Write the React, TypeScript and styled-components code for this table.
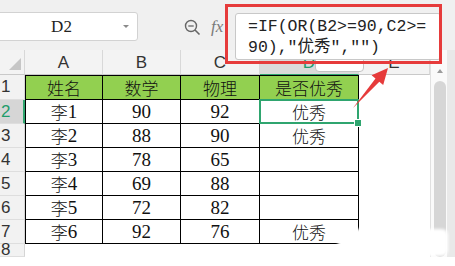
import { Fragment } from 'react';
import styled, { createGlobalStyle } from 'styled-components';

const GlobalStyle = createGlobalStyle`
  html, body { margin: 0; padding: 0; background: #fff; }
  * { box-sizing: border-box; }
`;

const HAN = /([\u4e00-\u9fff]+)/;

const Frame = styled.div`
  position: relative;
  width: 455px;
  height: 266px;
  overflow: hidden;
  background: #fff;
  font-family: "Liberation Serif", "Noto Sans CJK SC", serif;
`;

const Toolbar = styled.div`
  display: flex;
  align-items: flex-start;
  height: 50px;
  padding-top: 12px;
  background: #f0f0f0;
`;

const NameBox = styled.div`
  display: grid;
  grid-template-columns: 1fr 14px;
  align-items: center;
  width: 139px;
  height: 29px;
  margin-left: -1px;
  background: #fff;
  border: 1px solid #d2d2d2;
  border-radius: 0 3px 3px 0;
  font: 17px "Liberation Serif", serif;
  color: #222;
  text-align: center;
`;

const Caret = styled.span`
  width: 0;
  height: 0;
  border-left: 3px solid transparent;
  border-right: 3px solid transparent;
  border-top: 3px solid #8a8a8a;
`;

const ZoomIcon = styled.svg`
  margin: 7px 0 0 46px;
`;

const Fx = styled.span`
  margin: 5px 0 0 10px;
  font: italic 17px "Liberation Serif", serif;
  color: #7a7a7a;
`;

const Sheet = styled.div`
  display: flex;
  height: 207px;
`;

const Grid = styled.div`
  display: grid;
  grid-template-columns: 25px 78px 78px 79px 99px 71px;
  grid-template-rows: 25px 25px repeat(6, 24px) 13px;
  overflow: hidden;
`;

const Corner = styled.div`
  position: relative;
  background: #f3f3f3;
  border-right: 1px solid #d8d8d8;
  border-bottom: 1px solid #c9c9c9;
  &::after {
    content: "";
    position: absolute;
    right: 3px;
    bottom: 4px;
    border-left: 12px solid transparent;
    border-bottom: 12px solid #c6c6c6;
  }
`;

const ColHeader = styled.div<{ $active?: boolean }>`
  display: flex;
  align-items: center;
  justify-content: center;
  padding-top: 2px;
  background: ${p => (p.$active ? '#dadada' : '#f3f3f3')};
  border-right: 1px solid #d8d8d8;
  border-bottom: 1px solid ${p => (p.$active ? '#2fa56f' : '#c9c9c9')};
  font: 17px "Liberation Sans", sans-serif;
  color: ${p => (p.$active ? '#1f9d6b' : '#333')};
`;

const RowHeader = styled.div<{ $active?: boolean }>`
  display: flex;
  align-items: center;
  padding-left: 1px;
  background: ${p => (p.$active ? '#d6d6d6' : '#f2f2f2')};
  border-right: ${p => (p.$active ? '2px solid #2fa56f' : '1px solid #d5d5d5')};
  border-bottom: 1px solid #dedede;
  font: 17px "Liberation Sans", sans-serif;
  color: ${p => (p.$active ? '#1f9d6b' : '#333')};
`;

const Cell = styled.div<{ $green?: boolean; $first?: boolean; $top?: boolean; $selected?: boolean }>`
  position: relative;
  display: flex;
  align-items: center;
  justify-content: center;
  background: ${p => (p.$green ? '#92d050' : '#fff')};
  border-right: 1px solid #000;
  border-bottom: 1px solid #000;
  border-left: ${p => (p.$first ? '1px solid #000' : 'none')};
  border-top: ${p => (p.$top ? '1px solid #000' : 'none')};
  font-size: 19px;
  color: #111;
  white-space: nowrap;
  ${p =>
    p.$selected &&
    `
    &::after {
      content: "";
      position: absolute;
      inset: -1px -1px -1px -1px;
      border: 2px solid #2fa56f;
    }
    &::before {
      content: "";
      position: absolute;
      right: -4px;
      bottom: -4px;
      width: 6px;
      height: 6px;
      background: #2fa56f;
      border: 1px solid #fff;
      z-index: 1;
    }
  `}
`;

const Blank = styled.div`
  background: #fff;
`;

const Han = styled.span`
  font-family: "Noto Sans CJK SC", sans-serif;
  font-size: 17px;
  font-weight: 300;
`;

const Scrollbar = styled.div`
  display: flex;
  flex-direction: column;
  align-items: flex-start;
  width: 25px;
  padding: 19px 0 0 3px;
  background: #fafafa;
  border-left: 1px solid #e0e0e0;
  border-right: 8px solid #e9e9e9;
`;

const ScrollArrow = styled.span`
  margin: 0 0 8px 3px;
  border-left: 3px solid transparent;
  border-right: 3px solid transparent;
  border-bottom: 4px solid #9c9c9c;
`;

const Thumb = styled.span`
  flex: 1;
  width: 12px;
  border-radius: 6px;
  background: #d6d6d6;
`;

const FormulaPopup = styled.div`
  position: absolute;
  left: 235px;
  top: 13px;
  width: 206px;
  height: 47px;
  padding: 2px 0 0 12px;
  background: #fff;
  border: 1px solid #c8c8c8;
  border-radius: 3px;
  font: 16.5px/21px "Liberation Mono", "Noto Sans CJK SC", monospace;
  color: #222;
  white-space: nowrap;
`;

const TipTab = styled.div`
  position: absolute;
  left: 315px;
  top: 52px;
  width: 49px;
  height: 20px;
  background: #fff;
  border: 1px solid #c3c3c3;
  border-radius: 0 0 4px 4px;
`;

const Highlight = styled.div`
  position: absolute;
  left: 225px;
  top: 4px;
  width: 217px;
  height: 60px;
  border: 3px solid #e63b3b;
`;

const Arrow = styled.svg`
  position: absolute;
  left: 0;
  top: 0;
  pointer-events: none;
`;

const Smudge = styled.div`
  position: absolute;
  left: 338px;
  top: 229px;
  width: 110px;
  height: 27px;
  background: #fff;
  border-radius: 6px;
  filter: blur(1.5px);
`;

const rows = [
  ['姓名', '数学', '物理', '是否优秀'],
  ['李1', '90', '92', '优秀'],
  ['李2', '88', '90', '优秀'],
  ['李3', '78', '65', ''],
  ['李4', '69', '88', ''],
  ['李5', '72', '82', ''],
  ['李6', '92', '76', '优秀'],
];

function Mixed({ text }: { text: string }) {
  return (
    <>
      {text
        .split(HAN)
        .filter(Boolean)
        .map((part, i) =>
          HAN.test(part) ? <Han key={i}>{part}</Han> : <span key={i}>{part}</span>
        )}
    </>
  );
}

export default function App() {
  return (
    <Frame>
      <GlobalStyle />
      <Toolbar>
        <NameBox>
          <span>D2</span>
          <Caret />
        </NameBox>
        <ZoomIcon width="17" height="17" viewBox="0 0 17 17">
          <circle cx="7" cy="7" r="5.5" fill="none" stroke="#666" strokeWidth="1.4" />
          <line x1="11" y1="11" x2="15.5" y2="15.5" stroke="#666" strokeWidth="1.6" />
          <line x1="4.3" y1="7" x2="9.7" y2="7" stroke="#666" strokeWidth="1.3" />
        </ZoomIcon>
        <Fx>fx</Fx>
      </Toolbar>

      <Sheet>
        <Grid>
          <Corner />
          {['A', 'B', 'C', 'D', 'E'].map(c => (
            <ColHeader key={c} $active={c === 'D'}>
              {c}
            </ColHeader>
          ))}
          {rows.map((row, r) => (
            <Fragment key={r}>
              <RowHeader $active={r === 1}>{r + 1}</RowHeader>
              {row.map((v, c) => (
                <Cell
                  key={c}
                  $green={r === 0}
                  $first={c === 0}
                  $top={r === 0}
                  $selected={r === 1 && c === 3}
                >
                  <Mixed text={v} />
                </Cell>
              ))}
              <Blank />
            </Fragment>
          ))}
          <RowHeader>8</RowHeader>
          {[0, 1, 2, 3, 4].map(i => (
            <Blank key={i} />
          ))}
        </Grid>
        <Scrollbar>
          <ScrollArrow />
          <Thumb />
        </Scrollbar>
      </Sheet>

      <TipTab />
      <FormulaPopup>
        =IF(OR(B2&gt;=90,C2&gt;=
        <br />
        90),"优秀","")
      </FormulaPopup>
      <Highlight />
      <Arrow width="455" height="266" viewBox="0 0 455 266">
        <polygon
          points="353,108 375.5,78.4 371.6,75.2 388,68 383.2,85 379.3,81.7"
          fill="#e63b3b"
        />
      </Arrow>
      <Smudge />
    </Frame>
  );
}
